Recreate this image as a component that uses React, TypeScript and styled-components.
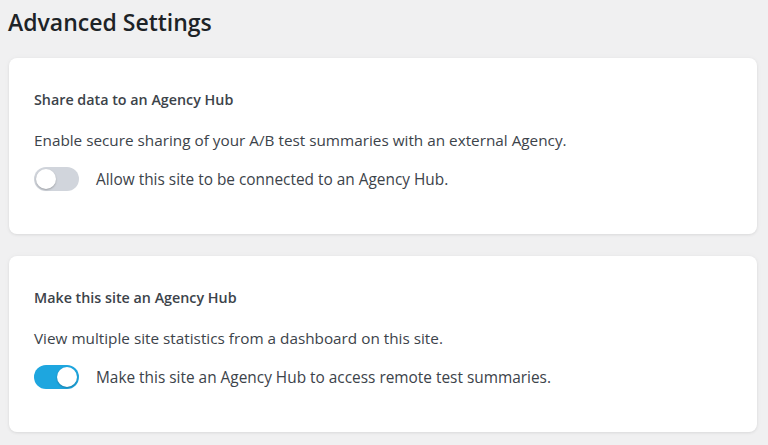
import React, { useState } from 'react';
import styled, { createGlobalStyle } from 'styled-components';

const GlobalStyle = createGlobalStyle`
  html, body {
    margin: 0;
    padding: 0;
    background: #f0f0f1;
  }
  body {
    font-family: "Open Sans", "Noto Sans", sans-serif;
    color: #3c434a;
  }
`;

const Page = styled.div`
  padding: 5px 11px 0 9px;
  display: flex;
  flex-direction: column;
`;

const Title = styled.h1`
  margin: 0 0 19px -1px;
  font-size: 23px;
  line-height: 34px;
  font-weight: 600;
  color: #1d2327;
`;

const Card = styled.section`
  background: #fff;
  border-radius: 8px;
  box-shadow: 0 1px 3px rgba(0, 0, 0, 0.08), 0 0 6px rgba(0, 0, 0, 0.03);
  padding: 31px 25px 0;
  height: 176px;
  box-sizing: border-box;
  margin-bottom: 22px;
`;

const CardTitle = styled.h2`
  margin: 0 0 18px;
  font-size: 14.3px;
  line-height: 22px;
  font-weight: 600;
  color: #3c434a;
`;

const Description = styled.p`
  margin: 0 0 16px;
  font-size: 15.3px;
  line-height: 22px;
`;

const Row = styled.label`
  display: flex;
  align-items: center;
  gap: 17px;
  font-size: 15.4px;
  cursor: pointer;
`;

const Track = styled.span<{ $on: boolean }>`
  position: relative;
  flex: none;
  width: 45px;
  height: 24px;
  border-radius: 12px;
  background: ${(p) => (p.$on ? '#1ea6df' : '#d1d5dc')};
  transition: background 0.2s;
`;

const Knob = styled.span<{ $on: boolean }>`
  position: absolute;
  top: 2px;
  left: ${(p) => (p.$on ? '23px' : '2px')};
  width: 20px;
  height: 20px;
  border-radius: 50%;
  background: #fff;
  box-shadow: 0 1px 2px rgba(0, 0, 0, 0.25);
  transition: left 0.2s;
`;

interface ToggleProps {
  on: boolean;
  onChange: () => void;
  label: string;
}

const Toggle: React.FC<ToggleProps> = ({ on, onChange, label }) => (
  <Row onClick={onChange}>
    <Track $on={on}>
      <Knob $on={on} />
    </Track>
    {label}
  </Row>
);

const App: React.FC = () => {
  const [share, setShare] = useState(false);
  const [hub, setHub] = useState(true);

  return (
    <>
      <GlobalStyle />
      <Page>
        <Title>Advanced Settings</Title>
        <Card>
          <CardTitle>Share data to an Agency Hub</CardTitle>
          <Description>Enable secure sharing of your A/B test summaries with an external Agency.</Description>
          <Toggle on={share} onChange={() => setShare(!share)} label="Allow this site to be connected to an Agency Hub." />
        </Card>
        <Card>
          <CardTitle>Make this site an Agency Hub</CardTitle>
          <Description>View multiple site statistics from a dashboard on this site.</Description>
          <Toggle on={hub} onChange={() => setHub(!hub)} label="Make this site an Agency Hub to access remote test summaries." />
        </Card>
      </Page>
    </>
  );
};

export default App;
